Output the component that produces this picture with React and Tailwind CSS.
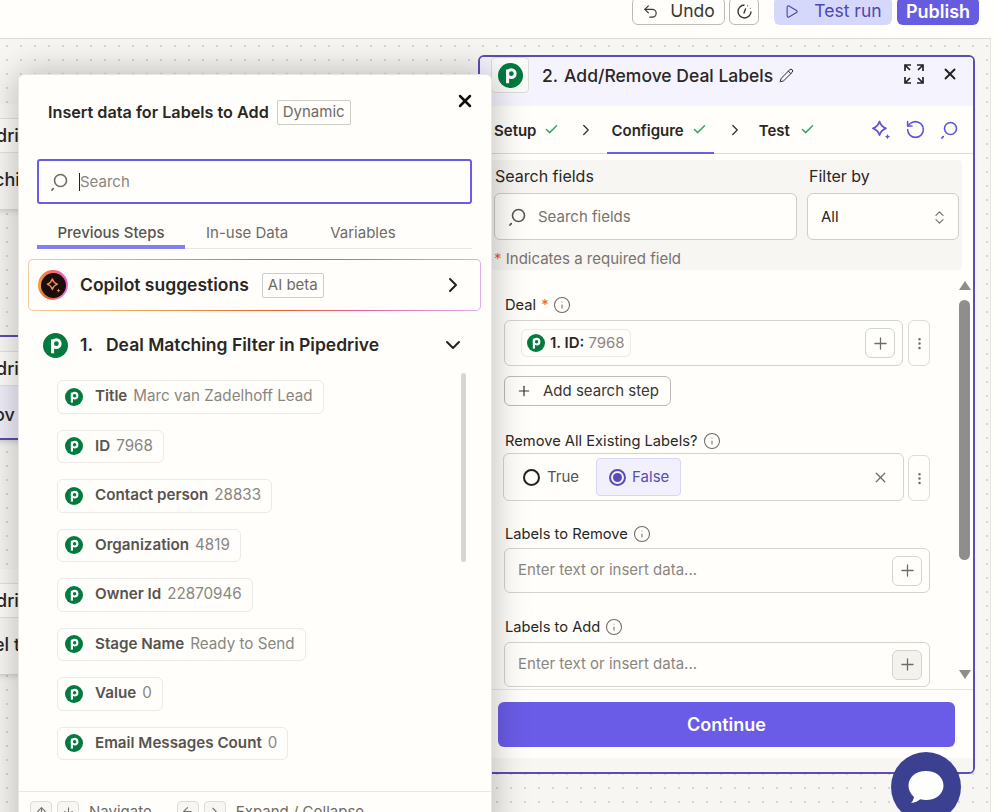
import React from "react";
import { Undo2, Play, X, Pencil, Check, ChevronRight, ChevronDown, RotateCcw, Plus, Info, EllipsisVertical, ChevronsUpDown, ArrowUp, ArrowDown, ArrowLeft } from "lucide-react";

const PipedriveLogo = ({ size = 24 }) => (
  <svg width={size} height={size} viewBox="0 0 24 24" className="shrink-0">
    <circle cx="12" cy="12" r="12" fill="#027a3e" />
    <circle cx="12.8" cy="10.2" r="3.7" fill="none" stroke="#fff" strokeWidth="2.8" />
    <path d="M9.2 6.2V19.5" stroke="#fff" strokeWidth="2.9" fill="none" />
  </svg>
);

const SearchIcon = ({ className = "", color = "currentColor" }) => (
  <svg width="20" height="20" viewBox="0 0 20 20" fill="none" className={className}>
    <circle cx="11.5" cy="8.5" r="6" stroke={color} strokeWidth="1.6" />
    <path d="M3 18l1.2-1.4" stroke={color} strokeWidth="1.8" strokeLinecap="round" />
  </svg>
);

const Sparkle = ({ color = "#5f55d8", size = 22 }) => (
  <svg width={size} height={size} viewBox="0 0 22 22" fill="none">
    <path d="M9.5 2.5c1 3.4 3 5.6 6.5 6.8-3.5 1.2-5.5 3.4-6.5 6.8C8.5 12.7 6.5 10.5 3 9.3c3.5-1.2 5.5-3.4 6.5-6.8z" stroke={color} strokeWidth="1.8" strokeLinejoin="round" />
    <path d="M17.5 15l.8 1.8 1.8.8-1.8.8-.8 1.8-.8-1.8-1.8-.8 1.8-.8z" fill={color} />
  </svg>
);

const GreenCheck = () => <Check size={15} strokeWidth={2.5} className="text-[#3aa76a]" />;

// left edges of the other nodes on the canvas, mostly covered by the modal
const BackCard = ({ top, row1, row2, selected }) => (
  <div
    className={`absolute left-[-20px] w-[60px] h-[105px] flex flex-col bg-[#fbfaf7] shadow-md ${selected ? "border-y-2 border-[#5a4db5]" : ""}`}
    style={{ top }}
  >
    <div className="h-[15px] shrink-0 border-b border-[#e4e3de]" />
    <div className="h-[34px] shrink-0 border-b border-[#e4e3de] flex items-center justify-start pl-[16px] text-[18px] font-medium text-[#2a2725] bg-[#fffefb]">
      {row1}
    </div>
    <div className={`flex-1 flex items-start pl-[14px] text-[18px] font-medium text-[#2a2725] ${selected ? "pt-[15px] bg-[#f0effa]" : "pt-[13px] bg-[#f9f8f5]"}`}>
      {row2}
    </div>
  </div>
);

const Pill = ({ name, value }) => (
  <div className="flex items-center self-start h-[33.5px] pl-[7px] pr-[10px] border border-[#ebeae6] rounded-md bg-[#fffefb]">
    <PipedriveLogo size={18} />
    <span className="ml-[12px] text-[15.2px] font-semibold text-[#57534f]">{name}</span>
    <span className="ml-[6px] text-[15.2px] text-[#8a8681]">{value}</span>
  </div>
);

const Kbd = ({ children }) => (
  <span className="w-[22px] h-[22px] flex justify-center pt-[3px] border border-[#dddcd7] rounded text-[#77736e] bg-[#f7f6f3]">{children}</span>
);

const Label = ({ children, required }) => (
  <div className="flex items-center gap-[5px] h-[20px] pl-[1px] text-[14.7px] text-[#2a2725]">
    <span>{children}</span>
    {required && <span className="text-[#e8622c]">*</span>}
    <Info size={18} strokeWidth={1.4} className="text-[#6f6b66]" />
  </div>
);

const InsertBtn = ({ active }) => (
  <div className={`w-[30px] h-[30px] flex items-center justify-center border border-[#d5d3cd] rounded-md ${active ? "bg-[#f3f2ec]" : "bg-[#fffefb]"}`}>
    <Plus size={19} strokeWidth={1.6} className="text-[#6f6b66]" />
  </div>
);

const Kebab = ({ h }) => (
  <div className={`w-[22px] ${h} flex items-center justify-center border border-[#dddcd7] rounded-md`}>
    <EllipsisVertical size={15} strokeWidth={2} className="text-[#6f6b66]" />
  </div>
);

const TextInput = ({ active }) => (
  <div className="w-[426px] h-[45px] flex items-center justify-between pl-[13px] pr-[7px] border border-[#d5d3cd] rounded-md text-[15px] text-[#8a8681]">
    <span>Enter text or insert data...</span>
    <InsertBtn active={active} />
  </div>
);

const pills = [
  ["Title", "Marc van Zadelhoff Lead"],
  ["ID", "7968"],
  ["Contact person", "28833"],
  ["Organization", "4819"],
  ["Owner Id", "22870946"],
  ["Stage Name", "Ready to Send"],
  ["Value", "0"],
  ["Email Messages Count", "0"],
];

const InsertModal = () => (
  <div className="absolute left-[18px] top-[35px] w-[474px] h-[772px] flex flex-col bg-[#fffefb] border border-[#e8e7e2] rounded-t-md shadow-[0_0_36px_rgba(0,0,0,0.28)] z-20">
    <div className="h-[84px] shrink-0 flex items-start pt-[25px] pl-[29px] relative">
      <span className="text-[16.2px] font-semibold text-[#2a2725] leading-[24px]">Insert data for Labels to Add</span>
      <span className="ml-[8px] h-[25px] px-[5px] flex items-center border border-[#cfcdc7] rounded-[2px] text-[15px] text-[#6f6b66]">Dynamic</span>
      <X size={20} strokeWidth={3} className="absolute right-[16px] top-[16px] text-[#111]" />
    </div>
    <div className="ml-[18px] mr-[19px] h-[45px] shrink-0 flex items-center pl-[10px] border-2 border-[#6a5ce6] rounded-[3px]">
      <SearchIcon color="#6f6b66" />
      <span className="ml-[10px] h-[18px] w-px bg-[#222]" />
      <span className="text-[15px] text-[#8a8681] pt-[2px]">Search</span>
    </div>
    <div className="ml-[18px] mr-[19px] mt-[20px] h-[25px] shrink-0 flex items-start border-b border-[#e8e7e2] text-[15px] leading-[18px] relative">
      <span className="w-[148px] h-[25px] text-center font-medium text-[#57534f] border-b-[4px] border-[#8580ee]">Previous Steps</span>
      <span className="ml-[21px] text-[#6f6b66]">In-use Data</span>
      <span className="ml-[42px] text-[#6f6b66]">Variables</span>
    </div>
    <div className="ml-[9px] mr-[10px] mt-[10px] h-[52px] shrink-0 p-px rounded-[5px] bg-[linear-gradient(90deg,#f3cf9f_0%,#eb9a50_30%,#e8622c_55%,#e860a0_75%,#dcb0ea_100%)]">
      <div className="h-full flex items-center pl-[9px] pr-[15px] bg-[#fffefb] rounded-[4px]">
        <div className="w-[30px] h-[30px] rounded-full flex items-center justify-center bg-[conic-gradient(from_200deg,#e8622c,#f0a040,#f07050,#e860c0,#e080e0,#e8622c)]">
          <div className="w-[25px] h-[25px] rounded-full bg-[#1c0d0d] flex items-center justify-center">
            <Sparkle color="#f08a4a" size={17} />
          </div>
        </div>
        <span className="ml-[12px] text-[17.5px] font-semibold text-[#2a2725]">Copilot suggestions</span>
        <span className="ml-[13px] h-[25px] px-[5px] flex items-center border border-[#cfcdc7] rounded-[2px] text-[15px] text-[#6f6b66]">AI beta</span>
        <ChevronRight size={24} strokeWidth={2} className="ml-auto text-[#222]" />
      </div>
    </div>
    <div className="mt-[20px] shrink-0 flex items-center pl-[24px] pr-[26px] h-[28px]">
      <PipedriveLogo size={25} />
      <span className="ml-[12px] text-[17.5px] font-semibold text-[#2a2725]">1.</span>
      <span className="ml-[13px] text-[17.5px] font-semibold text-[#2a2725]">Deal Matching Filter in Pipedrive</span>
      <ChevronDown size={24} strokeWidth={2} className="ml-auto text-[#222]" />
    </div>
    <div className="h-[432px] shrink-0 relative pt-[21px] pl-[38px]">
      <div className="flex flex-col gap-[16px]">
        {pills.map(([name, value]) => (
          <Pill key={name} name={name} value={value} />
        ))}
      </div>
      <div className="absolute left-[442px] top-[14px] w-[5px] h-[189px] rounded bg-[#d8d7cf]" />
    </div>
    <div className="h-[57px] shrink-0 border-t border-[#e8e7e2] flex items-start pt-[9px] pl-[11px] text-[15px] leading-[22px] text-[#6f6b66]">
      <div className="flex gap-[5px]">
        <Kbd><ArrowUp size={13} /></Kbd>
        <Kbd><ArrowDown size={13} /></Kbd>
      </div>
      <span className="ml-[10px]">Navigate</span>
      <div className="flex gap-[5px] ml-[25px]">
        <Kbd><ArrowLeft size={13} /></Kbd>
        <Kbd><ChevronRight size={13} /></Kbd>
      </div>
      <span className="ml-[10px]">Expand / Collapse</span>
    </div>
  </div>
);

const StepPanel = () => (
  <div className="absolute left-[478px] top-[16px] w-[497px] h-[719px] flex flex-col bg-[#fffefb] border-2 border-[#5a4db5] rounded-md overflow-hidden z-10">
    <div className="h-[49px] shrink-0 flex items-start bg-[#f5f4fe] relative">
      <div className="ml-[11px] w-[38px] h-[36px] flex items-center justify-center bg-[#fafaf8] border border-[#dddcd7] rounded-sm">
        <PipedriveLogo size={25} />
      </div>
      <span className="ml-[13px] mt-[6px] text-[17.5px] font-medium text-[#2a2725]">2.</span>
      <span className="ml-[6px] mt-[6px] text-[17.5px] font-medium text-[#2a2725]">Add/Remove Deal Labels</span>
      <Pencil size={15} strokeWidth={1.6} className="ml-[6px] mt-[11px] text-[#2a2725]" />
      <svg width="20" height="20" viewBox="0 0 20 20" className="absolute left-[424px] top-[7px]" fill="none" stroke="#222" strokeWidth="1.7">
        <path d="M1 7V1h6M1 1l5 5M13 1h6v6M19 1l-5 5M1 13v6h6M1 19l5-5M13 19h6v-6M19 19l-5-5" />
      </svg>
      <X size={18} strokeWidth={2.5} className="absolute left-[461px] top-[8px] text-[#222]" />
    </div>
    <div className="h-[48px] shrink-0 flex items-center border-b border-[#dddcd7] relative text-[15px] font-semibold text-[#2a2725]">
      <span className="ml-[14px] mt-[3px]">Setup</span>
      <span className="ml-[8px]"><GreenCheck /></span>
      <ChevronRight size={18} strokeWidth={1.7} className="ml-[18px] text-[#333]" />
      <span className="ml-[16px] mt-[3px]">Configure</span>
      <span className="ml-[8px]"><GreenCheck /></span>
      <ChevronRight size={18} strokeWidth={1.7} className="ml-[19px] text-[#333]" />
      <span className="ml-[15px] mt-[3px]">Test</span>
      <span className="ml-[10px]"><GreenCheck /></span>
      <div className="absolute left-[127px] bottom-[-1px] w-[107px] h-[2px] bg-[#6a5ce6]" />
      <div className="ml-auto mr-[14px] flex items-center gap-[13px]">
        <Sparkle />
        <RotateCcw size={21} strokeWidth={1.8} className="text-[#5f55d8]" />
        <SearchIcon color="#5f55d8" />
      </div>
    </div>
    <div className="mt-[6px] mx-[11px] h-[110px] shrink-0 bg-[#f7f6f3] rounded px-[3px] pt-[6px]">
      <div className="flex gap-[10px]">
        <div className="w-[303px]">
          <div className="h-[20px] text-[16px] text-[#2a2725] leading-[20px] pl-[1px]">Search fields</div>
          <div className="mt-[7px] h-[47px] flex items-center pl-[12px] pt-[1px] border border-[#cfcdc7] rounded-md bg-[#fffefb] text-[15px] text-[#77736e]">
            <SearchIcon color="#555" />
            <span className="ml-[11px]">Search fields</span>
          </div>
        </div>
        <div className="w-[152px]">
          <div className="h-[20px] text-[16px] text-[#2a2725] leading-[20px] pl-[2px]">Filter by</div>
          <div className="mt-[7px] h-[47px] flex items-center justify-between px-[13px] pr-[10px] pt-[1px] border border-[#cfcdc7] rounded-md bg-[#fffefb] text-[15px] text-[#2a2725]">
            <span>All</span>
            <ChevronsUpDown size={17} strokeWidth={1.6} className="text-[#6f6b66]" />
          </div>
        </div>
      </div>
      <div className="mt-[9px] text-[15px] text-[#77736e] leading-[20px]">
        <span className="text-[#e8622c]">*</span> Indicates a required field
      </div>
    </div>
    <div className="flex-1 min-h-0 relative border-b border-[#e8e7e2] pl-[24px] pt-[25px]">
      <Label required>Deal</Label>
      <div className="mt-[5px] flex gap-[5px] h-[46px]">
        <div className="w-[399px] flex items-center justify-between pl-[16px] pr-[7px] border border-[#d5d3cd] rounded-md">
          <div className="h-[28px] flex items-center pl-[5px] pr-[5px] border border-[#ebeae6] rounded-md text-[15px]">
            <PipedriveLogo size={18} />
            <span className="ml-[5px] font-semibold text-[#2a2725]">1. ID:</span>
            <span className="ml-[4px] text-[#8a8681]">7968</span>
          </div>
          <InsertBtn />
        </div>
        <Kebab h="h-[46px]" />
      </div>
      <div className="mt-[10px] w-[167px] h-[30px] flex items-center pl-[11px] border border-[#bdbbb5] rounded-md text-[15px] text-[#3a3733]">
        <Plus size={16} strokeWidth={1.8} />
        <span className="ml-[11px]">Add search step</span>
      </div>
      <div className="mt-[25px]"><Label>Remove All Existing Labels?</Label></div>
      <div className="mt-[2px] -ml-[1px] flex gap-[4px] items-end">
        <div className="w-[401px] h-[48px] flex items-center pl-[19px] pr-[14px] border border-[#d5d3cd] rounded-md text-[15px]">
          <span className="w-[17px] h-[17px] rounded-full border-2 border-[#222]" />
          <span className="ml-[7px] text-[#57534f]">True</span>
          <div className="ml-[17px] w-[85px] h-[38px] flex items-center pl-[12px] bg-[#f1f0fc] border border-[#d8d6f5] rounded">
            <span className="w-[17px] h-[17px] rounded-full border-2 border-[#5a4db5] flex items-center justify-center">
              <span className="w-[9px] h-[9px] rounded-full bg-[#5a4db5]" />
            </span>
            <span className="ml-[6px] text-[#5a4db5]">False</span>
          </div>
          <X size={17} strokeWidth={1.8} className="ml-auto text-[#6f6b66]" />
        </div>
        <Kebab h="h-[46px]" />
      </div>
      <div className="mt-[23px]"><Label>Labels to Remove</Label></div>
      <div className="mt-[4px]"><TextInput /></div>
      <div className="mt-[24px]"><Label>Labels to Add</Label></div>
      <div className="mt-[5px]"><TextInput active /></div>
      <div className="absolute left-[479px] top-[30px] w-[11px] h-[260px] rounded-full bg-[#8f8e8c]" />
      <div className="absolute left-[479px] top-[11px] w-0 h-0 border-x-[6px] border-x-transparent border-b-[9px] border-b-[#8f8e8c]" />
      <div className="absolute left-[479px] top-[400px] w-0 h-0 border-x-[6px] border-x-transparent border-t-[9px] border-t-[#8f8e8c]" />
    </div>
    <div className="h-[68px] shrink-0 pt-[12px] px-[18px]">
      <div className="w-[457px] h-[45px] flex items-center justify-center rounded-md bg-[#6a5ce6] text-white text-[18px] font-semibold">Continue</div>
    </div>
    <div className="h-[14px] shrink-0 bg-[#f7f6f3]" />
  </div>
);

export default function App() {
  return (
    <div className="relative w-[995px] h-[812px] overflow-hidden flex flex-col bg-[#fffefb] font-['Inter',sans-serif]">
      <div className="h-[39px] shrink-0 mr-[4px] border-b border-[#dddcd7] bg-[#fffefb] flex items-start justify-end pr-[12px]">
        <div className="flex items-start -mt-[3px]">
          <div className="w-[93px] h-[28px] flex items-center justify-center gap-[11px] border border-[#bdbbb5] rounded-md text-[17.5px] text-[#3a3733]">
            <Undo2 size={17} strokeWidth={1.7} />
            <span>Undo</span>
          </div>
          <div className="ml-[4px] w-[30px] h-[28px] flex items-center justify-center border border-[#bdbbb5] rounded-md">
            <svg width="17" height="17" viewBox="0 0 17 17" fill="none" stroke="#3a3733" strokeWidth="1.4">
              <path d="M8.5 2a6.5 6.5 0 1 0 6.5 6.5" />
              <path d="M14.5 5.5l-.3-.5M12 2.8l-.6-.3" />
              <path d="M9.5 6L8 10" strokeLinecap="round" />
            </svg>
          </div>
          <div className="ml-[15px] w-[118px] h-[28px] flex items-center justify-center gap-[15px] rounded-md bg-[#d6d8fb] text-[17.5px] text-[#4f46b0]">
            <Play size={15} strokeWidth={1.8} />
            <span>Test run</span>
          </div>
          <div className="ml-[5px] w-[82px] h-[28px] flex items-center justify-center rounded-md bg-[#665ce0] text-[18px] font-semibold text-white">Publish</div>
        </div>
      </div>
      <div className="flex-1 relative mr-[4px] border-r border-[#e4e3de] bg-[#f7f6f3] bg-[radial-gradient(#d6d5ce_1px,transparent_1px)] bg-[size:14px_14px]">
        <BackCard top={65} row1="dri" row2="chi" />
        <BackCard top={296} row1="dri" row2="ov" selected />
        <BackCard top={530} row1="dri" row2="el t" />
        <StepPanel />
        <InsertModal />
      </div>
      <div className="absolute left-[891px] top-[752px] w-[70px] h-[70px] rounded-full bg-[#3b4190] flex items-center justify-center z-30">
        <svg width="38" height="36" viewBox="0 0 38 36">
          <path d="M19 2c10 0 17.5 6 17.5 14.5S29 31 19 31c-2 0-4-.3-5.8-.8C11 32 8 33.5 4 34c1.5-1.5 2.5-3.5 3-6C3.5 25 1.5 21 1.5 16.5 1.5 8 9 2 19 2z" fill="#fff" />
        </svg>
      </div>
    </div>
  );
}
